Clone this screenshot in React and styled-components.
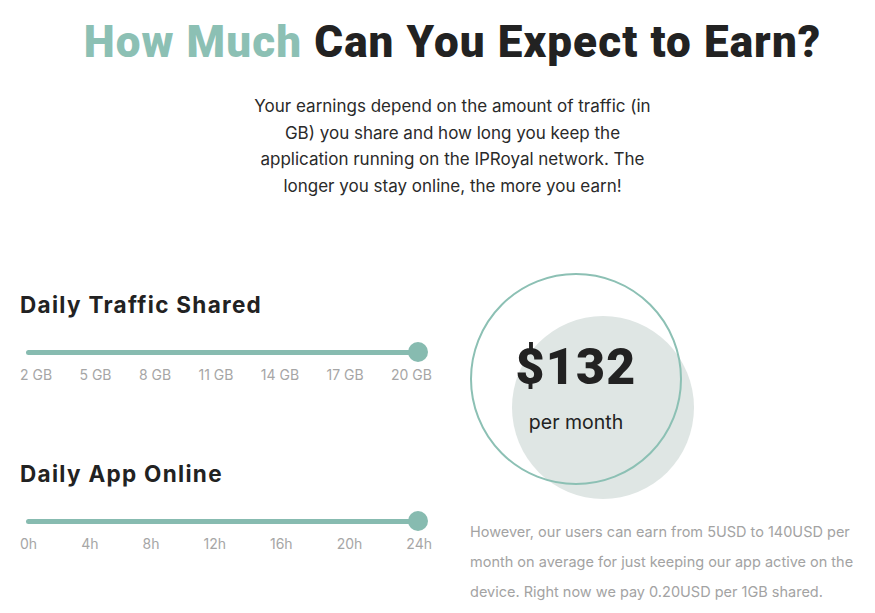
import React from 'react';
import styled, { createGlobalStyle } from 'styled-components';

const Global = createGlobalStyle`
  body {
    margin: 0;
    background: #fff;
    font-family: Inter, "Noto Sans", sans-serif;
  }
`;

const Page = styled.div`
  width: 875px;
  height: 613px;
  overflow: hidden;
  box-sizing: border-box;
  padding: 17px 20px 0 20px;
`;

const Header = styled.header`
  padding-left: 30px;
`;

const Title = styled.h1`
  margin: 0;
  text-align: center;
  font-family: Roboto, "Liberation Sans", sans-serif;
  font-size: 44px;
  font-weight: 900;
  line-height: 50px;
  color: #222;
  letter-spacing: 1.1px;
  span { color: #8cc0b4; }
`;

const Intro = styled.p`
  margin: 26px auto 0;
  width: 404px;
  text-align: center;
  font-size: 17px;
  line-height: 26.5px;
  color: #2a2a2a;
`;

const Body = styled.div`
  display: grid;
  grid-template-columns: 412px 1fr;
  column-gap: 38px;
  margin-top: 74px;
`;

const Controls = styled.div`
  display: flex;
  flex-direction: column;
  gap: 76px;
  padding-top: 18px;
`;

const Group = styled.div``;

const GroupTitle = styled.h2`
  margin: 0;
  font-size: 22.5px;
  font-weight: 700;
  line-height: 28px;
  letter-spacing: 1.3px;
  color: #222;
`;

const Slider = styled.div`
  display: flex;
  align-items: center;
  margin: 23px 4px 0 6px;
  height: 20px;
`;

const Fill = styled.div`
  flex: 1;
  height: 5px;
  border-radius: 3px;
  background: #87bbb0;
`;

const Thumb = styled.div`
  width: 20px;
  height: 20px;
  border-radius: 50%;
  background: #87bbb0;
  margin-left: -10px;
`;

const Ticks = styled.div`
  display: flex;
  justify-content: space-between;
  margin-top: 4px;
  font-size: 14px;
  line-height: 18px;
  color: #a6a6a6;
`;

const Result = styled.div`
  display: flex;
  flex-direction: column;
`;

const Badge = styled.div`
  position: relative;
  width: 224px;
  height: 226px;
`;

const Ring = styled.div`
  position: absolute;
  left: 0;
  top: 0;
  width: 212px;
  height: 212px;
  box-sizing: border-box;
  border-radius: 50%;
  border: 2px solid #8cc0b4;
`;

const Disc = styled.div`
  position: absolute;
  left: 42px;
  top: 43px;
  width: 182px;
  height: 183px;
  border-radius: 50%;
  background: #dfe6e4;
`;

const Amount = styled.div`
  position: absolute;
  left: 0;
  top: 0;
  width: 212px;
  height: 212px;
  display: flex;
  flex-direction: column;
  align-items: center;
  justify-content: center;
`;

const Price = styled.div`
  font-family: Roboto, "Liberation Sans", sans-serif;
  font-size: 50px;
  font-weight: 900;
  line-height: 56px;
  letter-spacing: 1.3px;
  color: #222;
  margin-top: 14px;
`;

const Per = styled.div`
  font-size: 19.5px;
  line-height: 24px;
  color: #222;
  margin-top: 15px;
`;

const Note = styled.p`
  margin: 18px 0 0;
  font-size: 14.5px;
  line-height: 30px;
  color: #a3a3a3;
`;

const traffic = ['2 GB', '5 GB', '8 GB', '11 GB', '14 GB', '17 GB', '20 GB'];
const hours = ['0h', '4h', '8h', '12h', '16h', '20h', '24h'];

const Range = ({ title, labels }) => (
  <Group>
    <GroupTitle>{title}</GroupTitle>
    <Slider>
      <Fill />
      <Thumb />
    </Slider>
    <Ticks>
      {labels.map(l => <span key={l}>{l}</span>)}
    </Ticks>
  </Group>
);

export default function App() {
  return (
    <Page>
      <Global />
      <Header>
        <Title><span>How Much</span> Can You Expect to Earn?</Title>
        <Intro>
          Your earnings depend on the amount of traffic (in GB) you share and how long you keep the
          application running on the IPRoyal network. The longer you stay online, the more you earn!
        </Intro>
      </Header>
      <Body>
        <Controls>
          <Range title="Daily Traffic Shared" labels={traffic} />
          <Range title="Daily App Online" labels={hours} />
        </Controls>
        <Result>
          <Badge>
            <Disc />
            <Ring />
            <Amount>
              <Price>$132</Price>
              <Per>per month</Per>
            </Amount>
          </Badge>
          <Note>
            However, our users can earn from 5USD to 140USD per month on average for just keeping
            our app active on the device. Right now we pay 0.20USD per 1GB shared.
          </Note>
        </Result>
      </Body>
    </Page>
  );
}
